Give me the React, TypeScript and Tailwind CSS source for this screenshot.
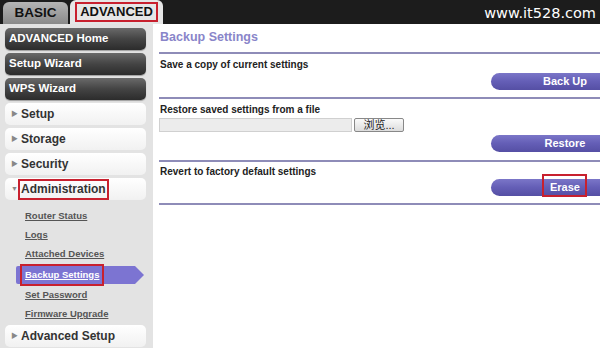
import React from "react";

const font = { fontFamily: '"Liberation Sans", Arial, "Noto Sans CJK SC", sans-serif' };

function DarkBtn({ label }: { label: string }) {
  return (
    <div className="h-[22px] w-[141px] rounded-[5px] bg-gradient-to-b from-[#6a6a6a] via-[#444] to-[#2c2c2c] flex items-center pl-[4px] text-white font-bold text-[11.5px] shadow-[0_1px_1px_rgba(0,0,0,0.3)]">
      {label}
    </div>
  );
}

function MenuItem({ label, open, boxed }: { label: string; open?: boolean; boxed?: boolean }) {
  return (
    <div className="h-[22px] w-[141px] rounded-[5px] bg-gradient-to-b from-white to-[#f1f1f1] flex items-center pl-[6px] text-[#333] font-bold text-[12px]">
      <span className="text-[7px] text-[#888] w-[8px]">{open ? "▼" : "▶"}</span>
      {boxed ? (
        <span className="border-2 border-[#c8202e] px-[1px] h-[21px] flex items-center -ml-[1px]">{label}</span>
      ) : (
        <span className="ml-[2px]">{label}</span>
      )}
    </div>
  );
}

function SubLink({ label }: { label: string }) {
  return (
    <div className="h-[19px] flex items-center pl-[20px] text-[9.5px] font-bold text-[#555] underline">{label}</div>
  );
}

function PurpleBtn({ label, boxed }: { label: string; boxed?: boolean }) {
  return (
    <div className="flex justify-end">
      <div className="relative h-[17px] w-[109px] rounded-l-full bg-gradient-to-b from-[#7b76c8] via-[#645eb6] to-[#554fa4] flex items-center justify-center pl-[39px] text-white font-bold text-[11px]">
        {label}
        {boxed && (
          <div className="absolute left-[51px] top-[-5px] w-[45px] h-[23px] border-2 border-[#c8202e]" />
        )}
      </div>
    </div>
  );
}

function Divider() {
  return <div className="h-[2px] bg-[#8e8cb8] w-full" />;
}

export default function App() {
  return (
    <div className="w-[600px] h-[348px] overflow-hidden bg-[#e2e2e2] flex flex-col" style={font}>
      <div className="h-[24px] bg-[#1c1c1c] flex items-end relative shrink-0">
        <div className="ml-[3px] w-[65px] h-[22px] rounded-t-[6px] bg-gradient-to-b from-[#b5b5b5] to-[#8a8a8a] flex items-center justify-center font-bold text-[13.5px] text-[#111]">
          BASIC
        </div>
        <div className="ml-[2px] w-[93px] h-[24px] rounded-t-[6px] bg-[#e6e6e6] flex items-start justify-center pt-[2px]">
          <div className="w-[83px] h-[20px] border-2 border-[#c8202e] flex items-center justify-center font-bold text-[13px] text-[#111]">
            ADVANCED
          </div>
        </div>
        <div className="absolute right-[4px] top-[3px] text-white" style={{ fontFamily: '"DejaVu Sans", sans-serif', fontSize: 14.5 }}>
          www.it528.com
        </div>
      </div>
      <div className="flex flex-1">
        <div className="w-[153px] bg-[#e3e3e3] pl-[5px] pt-[4px] flex flex-col">
          <div className="flex flex-col gap-[3px]">
            <DarkBtn label="ADVANCED Home" />
            <DarkBtn label="Setup Wizard" />
            <DarkBtn label="WPS Wizard" />
            <MenuItem label="Setup" />
            <MenuItem label="Storage" />
            <MenuItem label="Security" />
            <MenuItem label="Administration" open boxed />
          </div>
          <div className="mt-[7px] flex flex-col">
            <SubLink label="Router Status" />
            <SubLink label="Logs" />
            <SubLink label="Attached Devices" />
            <div className="relative h-[22px] ml-[9px] w-[131px] flex items-center">
              <svg className="absolute inset-0" width="131" height="22" viewBox="0 0 131 22">
                <path d="M4 2 H121 L130 11 L121 20 H4 Q2 20 2 18 V4 Q2 2 4 2 Z" fill="#7c74d2" />
              </svg>
              <div className="relative ml-[6px] h-[22px] px-[3px] border-2 border-[#c8202e] flex items-center text-[9.5px] font-bold text-white underline">
                Backup Settings
              </div>
            </div>
            <SubLink label="Set Password" />
            <SubLink label="Firmware Upgrade" />
          </div>
          <div className="mt-[1px]">
            <MenuItem label="Advanced Setup" />
          </div>
        </div>
        <div className="flex-1 bg-white pl-[6px] pt-[3px]">
          <div className="pl-[1px] text-[12.5px] font-bold text-[#8985c9] h-[20px] flex items-center">Backup Settings</div>
          <div className="mt-[5px]"><Divider /></div>
          <div className="pt-[5px] h-[43px]">
            <div className="text-[10px] leading-[12px] font-bold text-[#222] pl-[1px]">Save a copy of current settings</div>
            <div className="mt-[2px]"><PurpleBtn label="Back Up" /></div>
          </div>
          <Divider />
          <div className="pt-[5px] h-[61px]">
            <div className="text-[10px] leading-[12px] font-bold text-[#222] pl-[1px]">Restore saved settings from a file</div>
            <div className="mt-[2px] flex items-center">
              <div className="w-[193px] h-[14px] bg-[#ececec] border border-[#d0d0d0]" />
              <div className="ml-[2px] w-[50px] h-[14px] border border-[#888] rounded-[2px] bg-gradient-to-b from-[#fafafa] to-[#dcdcdc] flex items-center justify-center text-[11px] leading-[12px] text-[#222]">
                浏览...
              </div>
            </div>
            <div className="mt-[3px]"><PurpleBtn label="Restore" /></div>
          </div>
          <Divider />
          <div className="pt-[4px] h-[41px]">
            <div className="text-[10px] leading-[12px] font-bold text-[#222] pl-[1px]">Revert to factory default settings</div>
            <div className="mt-[1px]"><PurpleBtn label="Erase" boxed /></div>
          </div>
          <Divider />
        </div>
      </div>
    </div>
  );
}
